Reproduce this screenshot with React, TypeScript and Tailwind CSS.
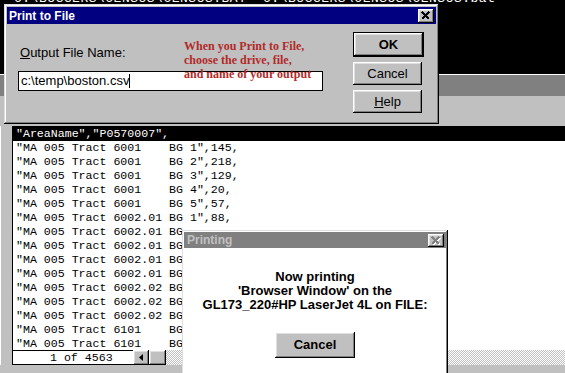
import React from "react";

const raised =
  "shadow-[inset_-1px_-1px_#000,inset_1px_1px_#fff,inset_-2px_-2px_#808080,inset_2px_2px_#dfdfdf]";
const frame =
  "shadow-[inset_-1px_-1px_#000,inset_1px_1px_#dfdfdf,inset_-2px_-2px_#808080,inset_2px_2px_#fff]";

const rows = [
  '"AreaName","P0570007",',
  '"MA 005 Tract 6001    BG 1",145,',
  '"MA 005 Tract 6001    BG 2",218,',
  '"MA 005 Tract 6001    BG 3",129,',
  '"MA 005 Tract 6001    BG 4",20,',
  '"MA 005 Tract 6001    BG 5",57,',
  '"MA 005 Tract 6002.01 BG 1",88,',
  '"MA 005 Tract 6002.01 BG',
  '"MA 005 Tract 6002.01 BG',
  '"MA 005 Tract 6002.01 BG',
  '"MA 005 Tract 6002.01 BG',
  '"MA 005 Tract 6002.02 BG',
  '"MA 005 Tract 6002.02 BG',
  '"MA 005 Tract 6002.02 BG',
  '"MA 005 Tract 6101    BG',
  '"MA 005 Tract 6101    BG',
];

const CloseX = ({ disabled }: { disabled?: boolean }) => (
  <svg width="10" height="9" viewBox="0 0 10 9" shapeRendering="crispEdges">
    {disabled && (
      <path d="M2 2 L9 9 M9 2 L2 9" stroke="#fff" strokeWidth="1.6" />
    )}
    <path
      d="M1 1 L8 8 M8 1 L1 8"
      stroke={disabled ? "#808080" : "#000"}
      strokeWidth="1.6"
    />
  </svg>
);

const Btn = ({ children, bold }: { children: React.ReactNode; bold?: boolean }) => (
  <div
    className={`w-[69px] h-[23px] bg-[#c0c0c0] ${raised} flex items-center justify-center text-[13px] text-black ${
      bold ? "font-bold" : ""
    }`}
  >
    {children}
  </div>
);

export default function App() {
  return (
    <div className="relative w-[565px] h-[373px] bg-black overflow-hidden font-['Liberation_Sans',Arial,sans-serif]">
      {/* console text behind everything */}
      <div className="absolute left-[14px] top-[-8px] text-white text-[13px] leading-[13px] tracking-[0.5px] whitespace-pre font-['Liberation_Mono',monospace]">
        C:\BUGGERS\CENSUS\CENSUS.BAT  C:\BUGGERS\CENSUS\CENSUS.bat
      </div>

      {/* browser window with the csv listing */}
      <div className="absolute left-0 top-[74px] w-[565px] h-[299px] flex flex-col bg-[#c0c0c0] border-t border-white">
        <div className="h-[21px] bg-[#808080]" />
        <div className="h-[30px] bg-[#c0c0c0]" />
        <div className="flex flex-1 min-h-0">
          <div className="w-[12px] bg-[#c0c0c0] border-l border-white" />
          <div className="flex-1 flex flex-col border-l border-black bg-white">
            <div className="h-[224px] border-t border-black overflow-hidden font-['Liberation_Mono',monospace] text-[11.6px] leading-[14px]">
              {rows.map((r, i) => (
                <div
                  key={i}
                  className={`h-[14px] pl-[3px] whitespace-pre ${
                    i === 0 ? "bg-black text-white" : "text-black"
                  }`}
                >
                  {r}
                </div>
              ))}
            </div>
            <div className="h-[15px] flex bg-white">
              <div className="w-[120px] border-t border-b border-black pl-[37px] text-[11.6px] leading-[13px] font-['Liberation_Mono',monospace] text-black">
                1 of 4563
              </div>
              <div className={`w-[16px] h-[15px] bg-[#c0c0c0] ${raised} flex items-center justify-center`}>
                <svg width="4" height="7" viewBox="0 0 4 7">
                  <path d="M4 0 L0 3.5 L4 7 Z" fill="#000" />
                </svg>
              </div>
              <div className={`w-[17px] h-[15px] bg-[#c0c0c0] ${raised}`} />
              <div className="flex-1 bg-[image:repeating-conic-gradient(#c0c0c0_0%_25%,#ffffff_0%_50%)] bg-[length:2px_2px]" />
            </div>
          </div>
        </div>
        <div className="h-[8px] bg-[#c0c0c0]" />
      </div>

      {/* Print to File dialog */}
      <div className={`absolute left-[4px] top-[4px] w-[435px] h-[120px] bg-[#c0c0c0] ${frame} p-[3px] flex flex-col`}>
        <div className="h-[17px] bg-[#000080] flex items-center justify-between pl-[2px] pr-[2px]">
          <span className="text-white font-bold text-[12px] leading-[14px]">Print to File</span>
          <div className={`w-[16px] h-[14px] bg-[#c0c0c0] ${raised} flex items-center justify-center`}>
            <CloseX />
          </div>
        </div>
        <div className="relative flex flex-1">
          <div className="ml-[11px] mt-[21px] w-[305px] flex flex-col">
            <div className="h-[16px] pl-[2px] text-[13px] leading-[16px] text-black">
              <span className="underline">O</span>utput File Name:
            </div>
            <div className="mt-[10px] h-[20px] border border-black bg-white flex items-center pl-[2px] text-[13px] text-black">
              c:\temp\boston.csv
              <span className="w-[1px] h-[14px] bg-black" />
            </div>
          </div>
          <div className="ml-auto mr-[12px] mt-[8px] flex flex-col gap-[5px]">
            <div className="border border-black">
              <Btn bold>OK</Btn>
            </div>
            <Btn>Cancel</Btn>
            <Btn>
              <span className="underline">H</span>elp
            </Btn>
          </div>
          <div className="absolute left-[177px] top-[15px] text-[12px] leading-[14px] font-bold text-[#b22a2a] font-['Liberation_Serif','Times_New_Roman',serif]">
            <div>When you Print to File,</div>
            <div>choose the drive, file,</div>
            <div>and name of your output</div>
          </div>
        </div>
      </div>

      {/* Printing progress dialog */}
      <div className={`absolute left-[182px] top-[230px] w-[266px] h-[148px] bg-[#c0c0c0] ${frame} p-[2px] flex flex-col`}>
        <div className="h-[16px] bg-[#808080] flex items-center justify-between pl-[3px] pr-[2px]">
          <span className="text-[#c0c0c0] font-bold text-[12px] leading-[14px]">Printing</span>
          <div className={`w-[16px] h-[13px] bg-[#c0c0c0] ${raised} flex items-center justify-center`}>
            <CloseX disabled />
          </div>
        </div>
        <div className="flex-1 bg-white flex flex-col items-center pt-[22px]">
          <div className="text-[13px] leading-[14px] font-bold text-black text-center">
            <div>Now printing</div>
            <div>'Browser Window' on the</div>
            <div>GL173_220#HP LaserJet 4L on FILE:</div>
          </div>
          <div className={`mt-[20px] w-[80px] h-[26px] bg-[#c0c0c0] ${raised} flex items-center justify-center text-[13px] font-bold text-black`}>
            Cancel
          </div>
        </div>
      </div>
    </div>
  );
}
